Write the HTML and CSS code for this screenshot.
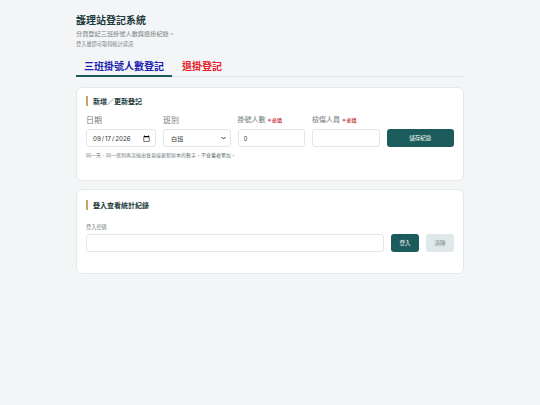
FILE: index.html
```html
<!DOCTYPE html>
<html lang="zh-Hant">
<head>
    <meta charset="UTF-8">
    <meta name="viewport" content="width=device-width, initial-scale=1.0">
    <title>護理站登記系統</title>
    <link rel="stylesheet" href="styles.css">
</head>
<body>
    <div class="page">
        <header class="page-head">
            <h1>護理站登記系統</h1>
            <p class="sub">分頁登記三班掛號人數與退掛紀錄。</p>
            <p class="hint">登入後即可取得統計資訊</p>
        </header>

        <nav class="tabs">
            <button class="tab active">三班掛號人數登記</button>
            <button class="tab cancel">退掛登記</button>
        </nav>

        <section class="card first">
            <h2 class="card-title">新增／更新登記</h2>
            <div class="form-row">
                <div class="field">
                    <label>日期</label>
                    <input type="date" value="2026-09-17">
                </div>
                <div class="field">
                    <label>班別</label>
                    <div class="select-wrap">
                        <select>
                            <option>白班</option>
                            <option>小夜</option>
                            <option>大夜</option>
                        </select>
                        <svg class="chev" width="5" height="4" viewBox="0 0 10 6"><path d="M1 1l4 4 4-4" fill="none" stroke="#333" stroke-width="2"/></svg>
                    </div>
                </div>
                <div class="field">
                    <label class="small">掛號人數 <span class="req">＊必填</span></label>
                    <input type="number" value="0">
                </div>
                <div class="field">
                    <label class="small">檢傷人員 <span class="req">＊必填</span></label>
                    <input type="text">
                </div>
                <div class="field">
                    <button class="btn primary wide">儲存紀錄</button>
                </div>
            </div>
            <p class="note">同一天、同一班別再次送出會直接更新原本的數字，不會重複累加。</p>
        </section>

        <section class="card second">
            <h2 class="card-title">登入查看統計紀錄</h2>
            <label class="tiny">登入密碼</label>
            <div class="login-row">
                <input type="password">
                <button class="btn primary">登入</button>
                <button class="btn light">清除</button>
            </div>
        </section>
    </div>
</body>
</html>
```

FILE: styles.css
```css
body {
    margin: 0;
    background-color: #f4f5f6;
    font-family: "Noto Sans CJK TC", "Noto Sans", sans-serif;
    color: #2b3a3c;
}
.page {
    width: 388px;
    margin: 0 auto;
    padding-top: 12px;
}
.page-head h1 {
    margin: 0;
    font-size: 10px;
    line-height: 16px;
    font-weight: 700;
    color: #1f3b3f;
}
.page-head .sub {
    margin: 1px 0 0;
    font-size: 6.2px;
    line-height: 9px;
    color: #7a8486;
}
.page-head .hint {
    margin: 1px 0 0;
    font-size: 5.2px;
    line-height: 9px;
    color: #7a8486;
}
.tabs {
    display: flex;
    gap: 2px;
    margin-top: 9px;
    border-bottom: 1px solid #dfe3e4;
}
.tab {
    background: none;
    border: none;
    font-family: inherit;
    font-size: 10px;
    font-weight: 700;
    line-height: 13px;
    padding: 2px 8px 3px;
    margin-bottom: -1px;
    border-bottom: 2px solid transparent;
    cursor: pointer;
}
.tab.active {
    color: #1c1fb0;
    border-bottom-color: #1e5a5c;
}
.tab.cancel {
    color: #e5212b;
}
.card {
    background-color: #fff;
    border: 1px solid #e6e9ea;
    border-radius: 6px;
    margin-top: 10px;
    padding: 8px 9px 21px;
}
.card.second {
    margin-top: 8px;
    padding-top: 10px;
}
.card-title {
    margin: 0;
    padding-left: 5px;
    border-left: 2px solid #c9a366;
    font-size: 7px;
    line-height: 10px;
    font-weight: 700;
    color: #22393b;
}
.form-row {
    display: grid;
    grid-template-columns: repeat(5, 1fr);
    gap: 7px;
    align-items: end;
    margin-top: 8px;
}
.field {
    display: flex;
    flex-direction: column;
}
.field label {
    font-size: 8px;
    line-height: 11px;
    color: #6f7a7c;
    margin-bottom: 4px;
}
.field label.small {
    font-size: 7px;
    line-height: 10px;
}
.req {
    color: #c0393b;
    font-size: 5px;
    font-weight: 700;
}
input, select {
    display: block;
    box-sizing: border-box;
    height: 18px;
    border: 1px solid #e3e7e8;
    border-radius: 3px;
    background: #fff;
    font-family: "Inter", "Noto Sans CJK TC", sans-serif;
    font-size: 6.2px;
    color: #333;
    padding: 0 5px;
    min-width: 0;
    width: 100%;
}
input[type="date"]::-webkit-datetime-edit-text {
    padding: 0;
}
input[type="date"]::-webkit-datetime-edit-fields-wrapper {
    padding: 0;
}
input[type="date"]::-webkit-calendar-picker-indicator {
    width: 7px;
    height: 7px;
    padding: 0;
    margin: 0;
}
.select-wrap {
    position: relative;
}
.select-wrap select {
    appearance: none;
    -webkit-appearance: none;
    padding-left: 7px;
}
.chev {
    position: absolute;
    right: 5px;
    top: 7px;
    pointer-events: none;
}
.btn {
    border: none;
    border-radius: 3px;
    height: 18px;
    font-family: inherit;
    font-size: 5.5px;
    cursor: pointer;
}
.btn.primary {
    background-color: #1b5b5c;
    color: #fff;
}
.btn.light {
    background-color: #dfe9ea;
    color: #6f8082;
}
.btn.wide {
    width: 100%;
}
.note {
    margin: 4px 0 0;
    font-size: 5px;
    line-height: 8px;
    color: #6f7a7c;
}
label.tiny {
    display: block;
    margin-top: 13px;
    font-size: 5.2px;
    line-height: 8px;
    color: #7a8486;
}
.login-row {
    display: flex;
    gap: 7px;
    margin-top: 3px;
}
.login-row input {
    flex: 1;
}
.login-row .btn {
    width: 28px;
    flex: none;
}
```
